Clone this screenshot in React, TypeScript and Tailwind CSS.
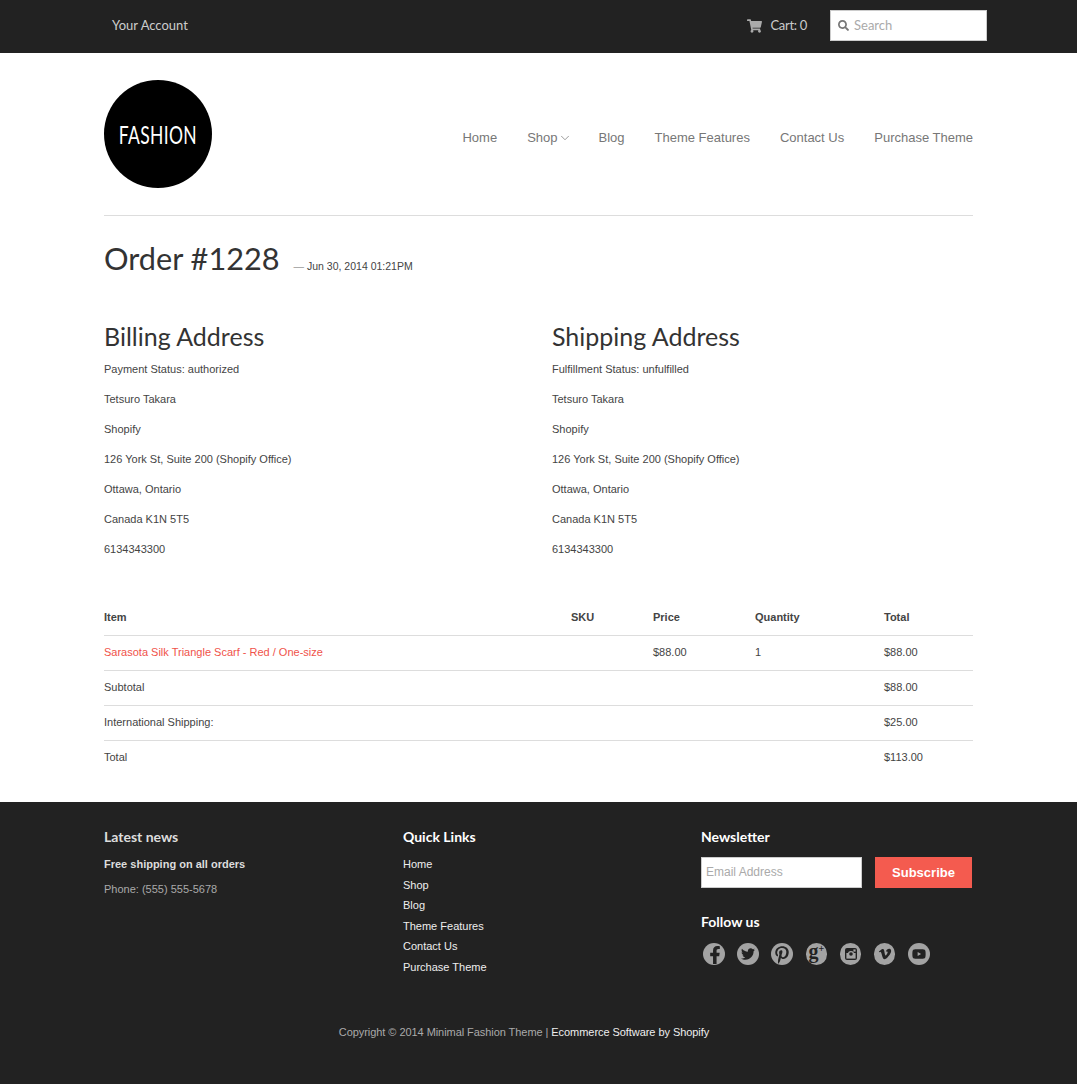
import React from 'react';
import { ChevronDown } from 'lucide-react';
import {
  FaFacebookF,
  FaPinterestP,
  FaSearch,
  FaShoppingCart,
  FaTwitter,
  FaVimeoV,
  FaYoutube,
} from 'react-icons/fa';

const navLinks = ['Blog', 'Theme Features', 'Contact Us', 'Purchase Theme'];
const quickLinks = ['Home', 'Shop', 'Blog', 'Theme Features', 'Contact Us', 'Purchase Theme'];
const headingFont = "font-['Lato',sans-serif]";

const InstagramIcon = () => (
  <svg viewBox="0 0 14 14" className="h-[14px] w-[14px]">
    <rect x="1" y="1" width="12" height="12" rx="2" fill="#222" />
    <rect x="2.4" y="6" width="9.2" height="5.6" fill="#a3a3a3" />
    <circle cx="7" cy="7" r="3.1" fill="#a3a3a3" />
    <circle cx="7" cy="7" r="1.8" fill="#222" />
    <rect x="9.4" y="2.4" width="2.2" height="2.2" fill="#a3a3a3" />
  </svg>
);

const socials = [
  { icon: <FaFacebookF className="h-[18px] w-[18px] translate-x-[1px] translate-y-[1px]" />, name: 'facebook' },
  { icon: <FaTwitter className="h-[14px] w-[14px]" />, name: 'twitter' },
  { icon: <FaPinterestP className="h-[18px] w-[18px] translate-y-[1px]" />, name: 'pinterest' },
  {
    icon: (
      <span className="-mt-[5px] flex items-center font-['Liberation_Serif',serif] text-[20px] leading-none font-bold">
        g<span className="-mt-[4px] text-[10px]">+</span>
      </span>
    ),
    name: 'google',
  },
  { icon: <InstagramIcon />, name: 'instagram' },
  { icon: <FaVimeoV className="h-[14px] w-[14px]" />, name: 'vimeo' },
  { icon: <FaYoutube className="h-[14px] w-[14px]" />, name: 'youtube' },
];

const AddressBlock: React.FC<{ title: string; status: string }> = ({ title, status }) => {
  const lines = [
    status,
    'Tetsuro Takara',
    'Shopify',
    '126 York St, Suite 200 (Shopify Office)',
    'Ottawa, Ontario',
    'Canada K1N 5T5',
    '6134343300',
  ];
  return (
    <div>
      <h2 className={`${headingFont} text-[25px] leading-[28px] text-[#333]`}>{title}</h2>
      <div className="mt-[12px]">
        {lines.map((line) => (
          <p key={line} className="h-[30px] text-[11px] leading-[15px] text-[#444]">
            {line}
          </p>
        ))}
      </div>
    </div>
  );
};

const TotalRow: React.FC<{ label: string; value: string; last?: boolean }> = ({ label, value, last }) => (
  <tr className="h-[35px] border-t border-[#ddd]">
    <td colSpan={4} className={last ? 'pb-[2px]' : ''}>
      {label}
    </td>
    <td className={last ? 'pb-[2px]' : ''}>{value}</td>
  </tr>
);

export default function App() {
  return (
    <div className="min-h-[1084px] bg-white font-['Liberation_Sans',Arial,sans-serif]">
      {/* Top bar */}
      <div className="flex h-[53px] items-center bg-[#222] pl-[112px] pr-[90px] text-[13px] text-[#ccc]">
        <a className={`${headingFont} -mt-[2px]`}>Your Account</a>
        <div className="ml-auto flex items-center">
          <FaShoppingCart className="-mt-[2px] h-[14px] w-[15px] text-[#aaa]" />
          <span className={`${headingFont} -mt-[2px] ml-[8px] tracking-[-0.3px]`}>Cart: 0</span>
          <div className="-mt-[2px] ml-[23px] flex h-[31px] w-[157px] items-center gap-[5px] border border-[#ccc] bg-white pl-[7px]">
            <FaSearch className="h-[11px] w-[11px] text-[#777]" />
            <span className={`${headingFont} text-[#aaa]`}>Search</span>
          </div>
        </div>
      </div>

      {/* Header */}
      <div className="mx-[104px] flex h-[163px] items-center justify-between border-b border-[#ddd] pb-[1px]">
        <div className="flex h-[108px] w-[108px] items-center justify-center rounded-full bg-black">
          <span className="mt-[2px] scale-x-[0.7] text-[25px] tracking-[0.5px] text-white font-['Lato',sans-serif]">
            FASHION
          </span>
        </div>
        <nav className="mt-[8px] flex items-center text-[13px] text-[#777]">
          <a>Home</a>
          <a className="ml-[30px] flex items-center">
            Shop
            <ChevronDown strokeWidth={1.25} className="-mr-[3px] h-[14px] w-[14px]" />
          </a>
          {navLinks.map((link) => (
            <a key={link} className="ml-[30px]">
              {link}
            </a>
          ))}
        </nav>
      </div>

      {/* Order */}
      <main className="mx-[104px]">
        <div className="mt-[23px] flex items-baseline">
          <h1 className={`${headingFont} text-[30.7px] leading-[40px] text-[#333]`}>Order #1228</h1>
          <span className="ml-[14px] text-[10.5px] text-[#444]">
            <span className="text-[#999]">—</span> Jun 30, 2014 01:21PM
          </span>
        </div>

        <div className="mt-[43px] grid grid-cols-[448px_1fr]">
          <AddressBlock title="Billing Address" status="Payment Status: authorized" />
          <AddressBlock title="Shipping Address" status="Fulfillment Status: unfulfilled" />
        </div>

        <table className="mt-[27px] w-full table-fixed text-left text-[11px] text-[#444]">
          <colgroup>
            <col className="w-[467px]" />
            <col className="w-[82px]" />
            <col className="w-[102px]" />
            <col className="w-[129px]" />
            <col />
          </colgroup>
          <thead>
            <tr className="h-[36px]">
              <th>Item</th>
              <th>SKU</th>
              <th>Price</th>
              <th>Quantity</th>
              <th>Total</th>
            </tr>
          </thead>
          <tbody>
            <tr className="h-[35px] border-t border-[#ddd]">
              <td className="text-[#f0524a]">Sarasota Silk Triangle Scarf - Red / One-size</td>
              <td />
              <td>$88.00</td>
              <td>1</td>
              <td>$88.00</td>
            </tr>
            <TotalRow label="Subtotal" value="$88.00" />
            <TotalRow label="International Shipping:" value="$25.00" />
            <TotalRow label="Total" value="$113.00" last />
          </tbody>
        </table>
      </main>

      {/* Footer */}
      <footer className="mt-[27px] h-[282px] bg-[#222] px-[104px] pt-[25px] text-[11px]">
        <div className="grid h-[180px] grid-cols-[299px_298px_1fr]">
          <div>
            <h3 className={`${headingFont} text-[14px] leading-[20px] font-bold text-[#ddd]`}>Latest news</h3>
            <p className="mt-[10px] font-bold leading-[15px] text-[#ddd]">Free shipping on all orders</p>
            <p className="mt-[10px] leading-[15px] text-[#aaa]">Phone: (555) 555-5678</p>
          </div>
          <div>
            <h3 className={`${headingFont} text-[14px] leading-[20px] font-bold text-white`}>Quick Links</h3>
            <ul className="mt-[10px]">
              {quickLinks.map((link) => (
                <li key={link} className="h-[20.6px] leading-[15px] text-[#eee]">
                  {link}
                </li>
              ))}
            </ul>
          </div>
          <div>
            <h3 className={`${headingFont} text-[14px] leading-[20px] font-bold text-white`}>Newsletter</h3>
            <div className="mt-[10px] flex">
              <div className="flex h-[31px] w-[161px] items-center border border-[#ccc] bg-white pb-[2px] pl-[4px] text-[12px] text-[#aaa]">
                Email Address
              </div>
              <div className="ml-[13px] flex h-[31px] w-[97px] items-center justify-center bg-[#f45b4f] text-[13px] font-bold text-white">
                Subscribe
              </div>
            </div>
            <h3 className={`${headingFont} mt-[24px] text-[14px] leading-[20px] font-bold text-white`}>Follow us</h3>
            <div className="mt-[11px] flex gap-[12.7px] pl-[2px]">
              {socials.map((s) => (
                <span
                  key={s.name}
                  className="flex h-[21.5px] w-[21.5px] items-center justify-center rounded-full bg-[#a3a3a3] text-[#222]"
                >
                  {s.icon}
                </span>
              ))}
            </div>
          </div>
        </div>
        <p className="mt-[17px] pr-[29px] text-center tracking-[-0.06px] text-[#aaa]">
          Copyright © 2014 Minimal Fashion Theme | <span className="text-[#eee]">Ecommerce Software by Shopify</span>
        </p>
      </footer>
    </div>
  );
}
